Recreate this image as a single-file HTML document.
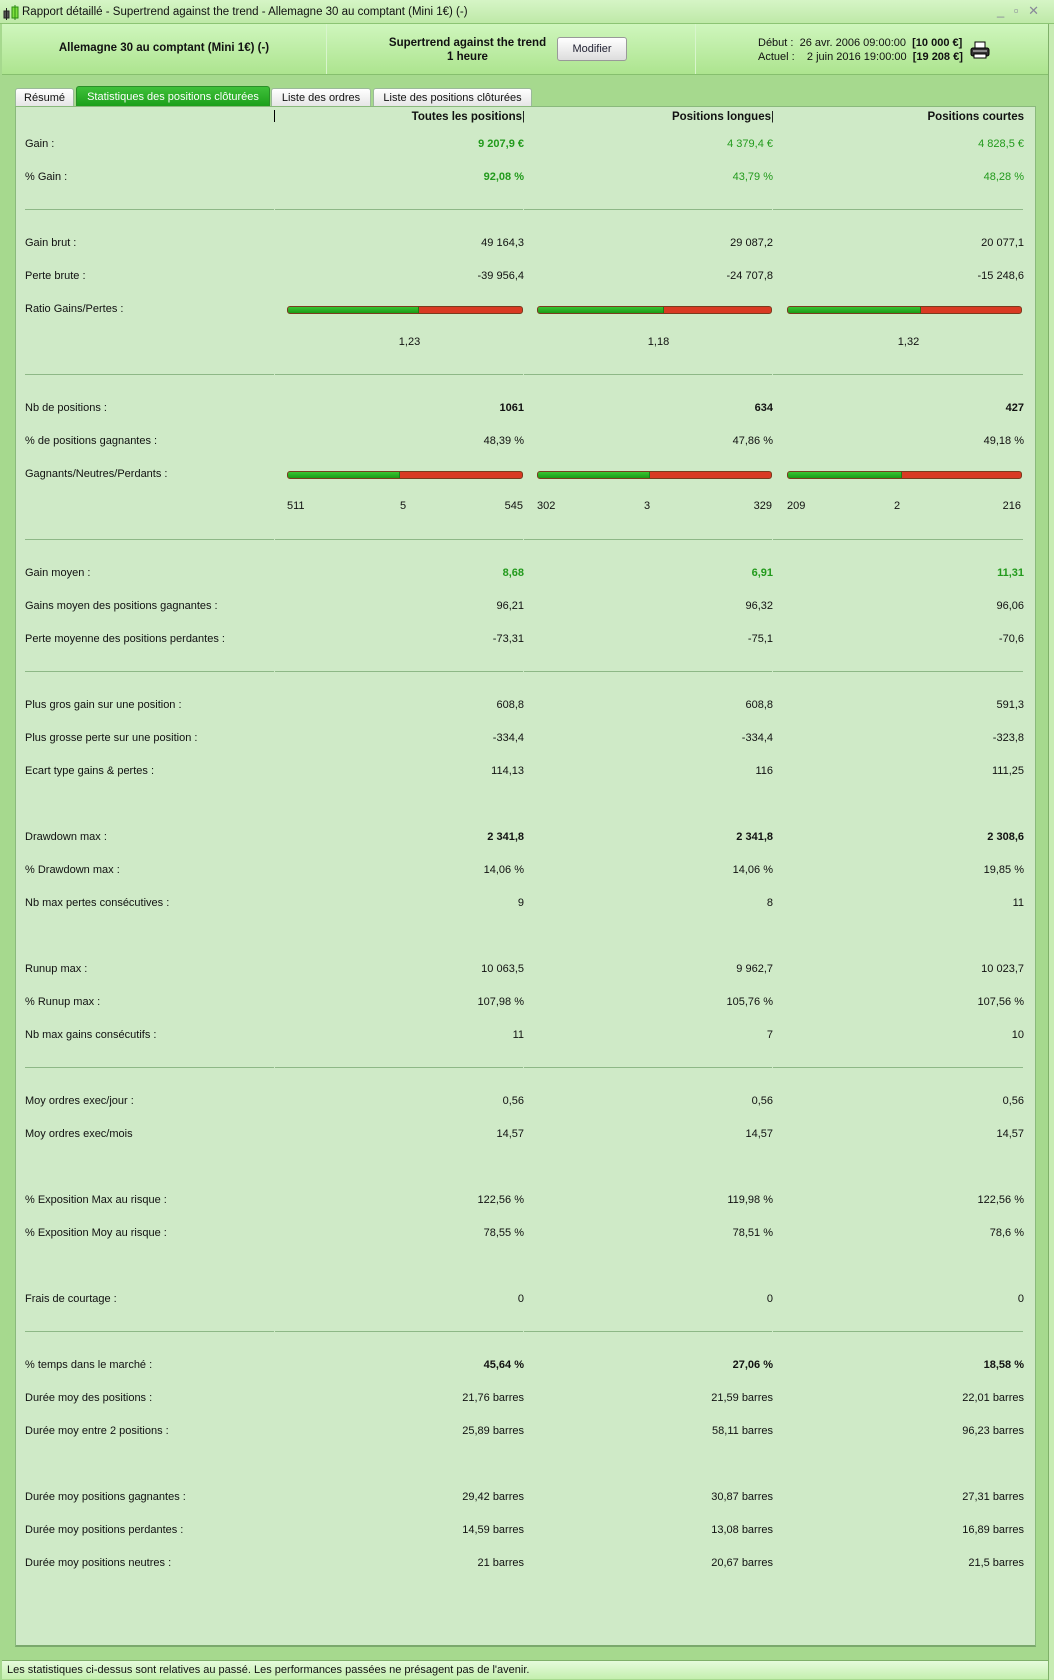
<!DOCTYPE html>
<html><head><meta charset="utf-8">
<style>
*{margin:0;padding:0;box-sizing:border-box}
body{width:1054px;height:1680px;overflow:hidden;background:#a6d98e;font-family:"Liberation Sans",Arial,sans-serif;font-size:11px;color:#111;position:relative}
.abs{position:absolute}
#title{left:0;top:0;width:1054px;height:24px;background:linear-gradient(#d6f5c6,#bfe9a8);border-bottom:1px solid #8cc474;line-height:24px;padding-left:22px;font-size:11.5px}
#hdr{left:2px;top:24px;width:1046px;height:51px;background:linear-gradient(#cff6bd,#ade48f);border-bottom:1px solid #86bf6e}
.dv{top:24px;width:1px;height:50px;background:#8fc67a;border-right:1px solid #d8f5cc}
#panel{left:15px;top:106px;width:1021px;height:1541px;background:#cfeac7;border:1px solid #8ab97c;border-bottom:2px solid #7aa86c}
.tab{top:88px;height:19px;background:linear-gradient(#fff,#e4e4e4);border:1px solid #9bb99a;border-bottom:none;border-radius:3px 3px 0 0;text-align:center;line-height:18px;font-size:11px}
.tab.on{background:linear-gradient(#3fc03a,#1a9e19);color:#fff;border-color:#2a8f28;top:86px;height:21px;line-height:20px}
table{position:absolute;left:0;top:127px;border-collapse:collapse;table-layout:fixed}
td{height:33px;padding:0;white-space:nowrap;vertical-align:middle}
td.l{padding-left:25px;width:275px}
td.v{text-align:right}
.c1{width:249px}.c2{width:249px}.c3{width:251px}
.g{color:#229a1c;font-weight:bold}
.b{font-weight:bold}
.sep td{position:relative}
.sep td:after{content:"";position:absolute;left:0;right:1px;top:16px;height:1px;background:#8eb887}
.sep td.l:after{left:25px}
.bar{position:absolute;height:8px;border-radius:3px;border:1px solid #7a3b1e;background:#d93a23;overflow:hidden}
.bar i{display:block;height:100%;background:linear-gradient(#39c432,#1b9a17);border-right:1px solid #1d7a18}
#status{left:2px;top:1660px;width:1046px;height:19px;background:linear-gradient(#e6fbdc,#c4efae);border-top:1px solid #7fb069;line-height:18px;padding-left:5px;font-size:11px}
</style></head><body>
<div id="title" class="abs">Rapport détaillé - Supertrend against the trend - Allemagne 30 au comptant (Mini 1€) (-)</div>
<svg class="abs" style="left:3px;top:5px" width="18" height="16"><rect x="1" y="6" width="5" height="7" fill="#555" stroke="#222"/><line x1="3.5" y1="3" x2="3.5" y2="15" stroke="#222"/><rect x="9" y="2" width="6" height="11" fill="#7fe040" stroke="#2a8a10"/><line x1="12" y1="0" x2="12" y2="15" stroke="#2a8a10"/></svg>
<div class="abs" style="right:12px;top:3px;color:#889;font-size:13px;letter-spacing:3px">_ ▫ ✕</div>
<div id="hdr" class="abs"></div>
<div class="abs dv" style="left:326px"></div>
<div class="abs dv" style="left:695px"></div>
<div class="abs b" style="left:2px;top:42px;width:324px;text-align:center;font-size:11.5px">Allemagne 30 au comptant (Mini 1€) (-)</div>
<div class="abs b" style="left:380px;top:36px;width:175px;text-align:center;font-size:11.5px;line-height:14px">Supertrend against the trend<br>1 heure</div>
<div class="abs" style="left:557px;top:37px;width:70px;height:24px;border:1px solid #999;border-radius:3px;background:linear-gradient(#fff,#ddd);text-align:center;line-height:22px;font-size:11px;color:#223">Modifier</div>
<div class="abs" style="left:758px;top:36px;line-height:14px;font-size:11px">Début :&nbsp; 26 avr. 2006 09:00:00&nbsp; <b>[10 000 €]</b><br>Actuel :&nbsp;&nbsp;&nbsp; 2 juin 2016 19:00:00&nbsp; <b>[19 208 €]</b></div>
<svg class="abs" style="left:970px;top:41px" width="20" height="18"><rect x="5" y="1" width="10" height="6" fill="#fff" stroke="#000"/><rect x="1" y="7" width="18" height="8" rx="2" fill="#333" stroke="#000"/><line x1="3" y1="10" x2="17" y2="10" stroke="#ddd"/><rect x="4" y="13" width="12" height="4" fill="#fff" stroke="#000"/></svg>
<div class="abs tab" style="left:15px;width:59px">Résumé</div>
<div class="abs tab on" style="left:76px;width:194px">Statistiques des positions clôturées</div>
<div class="abs tab" style="left:271px;width:100px">Liste des ordres</div>
<div class="abs tab" style="left:373px;width:159px">Liste des positions clôturées</div>
<div id="panel" class="abs">
<div class="abs" style="left:258px;top:3px;height:12px;width:1px;background:#000"></div>
<div class="abs b" style="left:260px;top:4px;width:249px;text-align:right;font-size:11.5px">Toutes les positions<span style="font-weight:normal">|</span></div>
<div class="abs b" style="left:509px;top:4px;width:249px;text-align:right;font-size:11.5px">Positions longues<span style="font-weight:normal">|</span></div>
<div class="abs b" style="left:758px;top:4px;width:250px;text-align:right;font-size:11.5px">Positions courtes</div>
<div class="bar" style="left:271px;top:199px;width:236px"><i style="width:56%"></i></div>
<div class="bar" style="left:521px;top:199px;width:235px"><i style="width:54%"></i></div>
<div class="bar" style="left:771px;top:199px;width:235px"><i style="width:57%"></i></div>
<div class="bar" style="left:271px;top:364px;width:236px"><i style="width:48%"></i></div>
<div class="bar" style="left:521px;top:364px;width:235px"><i style="width:48%"></i></div>
<div class="bar" style="left:771px;top:364px;width:235px"><i style="width:49%"></i></div>
</div>
<table style="left:0">
<tr><td class="l">Gain :</td><td class="v c1 g">9 207,9 €</td><td class="v c2 g" style="font-weight:normal">4 379,4 €</td><td class="v c3 g" style="font-weight:normal">4 828,5 €</td></tr>
<tr><td class="l">% Gain :</td><td class="v c1 g">92,08 %</td><td class="v c2 g" style="font-weight:normal">43,79 %</td><td class="v c3 g" style="font-weight:normal">48,28 %</td></tr>
<tr class="sep"><td class="l"></td><td></td><td></td><td></td></tr>
<tr><td class="l">Gain brut :</td><td class="v">49 164,3</td><td class="v">29 087,2</td><td class="v">20 077,1</td></tr>
<tr><td class="l">Perte brute :</td><td class="v">-39 956,4</td><td class="v">-24 707,8</td><td class="v">-15 248,6</td></tr>
<tr><td class="l">Ratio Gains/Pertes :</td><td></td><td></td><td></td></tr>
<tr><td class="l"></td><td style="text-align:center;padding-left:20px">1,23</td><td style="text-align:center;padding-left:20px">1,18</td><td style="text-align:center;padding-left:20px">1,32</td></tr>
<tr class="sep"><td class="l"></td><td></td><td></td><td></td></tr>
<tr><td class="l">Nb de positions :</td><td class="v b">1061</td><td class="v b">634</td><td class="v b">427</td></tr>
<tr><td class="l">% de positions gagnantes :</td><td class="v">48,39 %</td><td class="v">47,86 %</td><td class="v">49,18 %</td></tr>
<tr><td class="l">Gagnants/Neutres/Perdants :</td><td></td><td></td><td></td></tr>
<tr><td class="l"></td><td style="position:relative"><span class="abs" style="left:12px;top:10px">511</span><span class="abs" style="left:125px;top:10px">5</span><span class="abs" style="right:1px;top:10px">545</span></td><td style="position:relative"><span class="abs" style="left:13px;top:10px">302</span><span class="abs" style="left:120px;top:10px">3</span><span class="abs" style="right:1px;top:10px">329</span></td><td style="position:relative"><span class="abs" style="left:14px;top:10px">209</span><span class="abs" style="left:121px;top:10px">2</span><span class="abs" style="right:3px;top:10px">216</span></td></tr>
<tr class="sep"><td class="l"></td><td></td><td></td><td></td></tr>
<tr><td class="l">Gain moyen :</td><td class="v g">8,68</td><td class="v g">6,91</td><td class="v g">11,31</td></tr>
<tr><td class="l">Gains moyen des positions gagnantes :</td><td class="v">96,21</td><td class="v">96,32</td><td class="v">96,06</td></tr>
<tr><td class="l">Perte moyenne des positions perdantes :</td><td class="v">-73,31</td><td class="v">-75,1</td><td class="v">-70,6</td></tr>
<tr class="sep"><td class="l"></td><td></td><td></td><td></td></tr>
<tr><td class="l">Plus gros gain sur une position :</td><td class="v">608,8</td><td class="v">608,8</td><td class="v">591,3</td></tr>
<tr><td class="l">Plus grosse perte sur une position :</td><td class="v">-334,4</td><td class="v">-334,4</td><td class="v">-323,8</td></tr>
<tr><td class="l">Ecart type gains &amp; pertes :</td><td class="v">114,13</td><td class="v">116</td><td class="v">111,25</td></tr>
<tr><td class="l"></td><td></td><td></td><td></td></tr>
<tr><td class="l">Drawdown max :</td><td class="v b">2 341,8</td><td class="v b">2 341,8</td><td class="v b">2 308,6</td></tr>
<tr><td class="l">% Drawdown max :</td><td class="v">14,06 %</td><td class="v">14,06 %</td><td class="v">19,85 %</td></tr>
<tr><td class="l">Nb max pertes consécutives :</td><td class="v">9</td><td class="v">8</td><td class="v">11</td></tr>
<tr><td class="l"></td><td></td><td></td><td></td></tr>
<tr><td class="l">Runup max :</td><td class="v">10 063,5</td><td class="v">9 962,7</td><td class="v">10 023,7</td></tr>
<tr><td class="l">% Runup max :</td><td class="v">107,98 %</td><td class="v">105,76 %</td><td class="v">107,56 %</td></tr>
<tr><td class="l">Nb max gains consécutifs :</td><td class="v">11</td><td class="v">7</td><td class="v">10</td></tr>
<tr class="sep"><td class="l"></td><td></td><td></td><td></td></tr>
<tr><td class="l">Moy ordres exec/jour :</td><td class="v">0,56</td><td class="v">0,56</td><td class="v">0,56</td></tr>
<tr><td class="l">Moy ordres exec/mois</td><td class="v">14,57</td><td class="v">14,57</td><td class="v">14,57</td></tr>
<tr><td class="l"></td><td></td><td></td><td></td></tr>
<tr><td class="l">% Exposition Max au risque :</td><td class="v">122,56 %</td><td class="v">119,98 %</td><td class="v">122,56 %</td></tr>
<tr><td class="l">% Exposition Moy au risque :</td><td class="v">78,55 %</td><td class="v">78,51 %</td><td class="v">78,6 %</td></tr>
<tr><td class="l"></td><td></td><td></td><td></td></tr>
<tr><td class="l">Frais de courtage :</td><td class="v">0</td><td class="v">0</td><td class="v">0</td></tr>
<tr class="sep"><td class="l"></td><td></td><td></td><td></td></tr>
<tr><td class="l">% temps dans le marché :</td><td class="v b">45,64 %</td><td class="v b">27,06 %</td><td class="v b">18,58 %</td></tr>
<tr><td class="l">Durée moy des positions :</td><td class="v">21,76 barres</td><td class="v">21,59 barres</td><td class="v">22,01 barres</td></tr>
<tr><td class="l">Durée moy entre 2 positions :</td><td class="v">25,89 barres</td><td class="v">58,11 barres</td><td class="v">96,23 barres</td></tr>
<tr><td class="l"></td><td></td><td></td><td></td></tr>
<tr><td class="l">Durée moy positions gagnantes :</td><td class="v">29,42 barres</td><td class="v">30,87 barres</td><td class="v">27,31 barres</td></tr>
<tr><td class="l">Durée moy positions perdantes :</td><td class="v">14,59 barres</td><td class="v">13,08 barres</td><td class="v">16,89 barres</td></tr>
<tr><td class="l">Durée moy positions neutres :</td><td class="v">21 barres</td><td class="v">20,67 barres</td><td class="v">21,5 barres</td></tr>
</table>
<div id="status" class="abs">Les statistiques ci-dessus sont relatives au passé. Les performances passées ne présagent pas de l'avenir.</div>
<div class="abs" style="left:1048px;top:24px;width:1px;height:1656px;background:#7fb069"></div>
<div class="abs" style="left:1049px;top:24px;width:5px;height:1656px;background:#c8ecb4"></div>
</body></html>
